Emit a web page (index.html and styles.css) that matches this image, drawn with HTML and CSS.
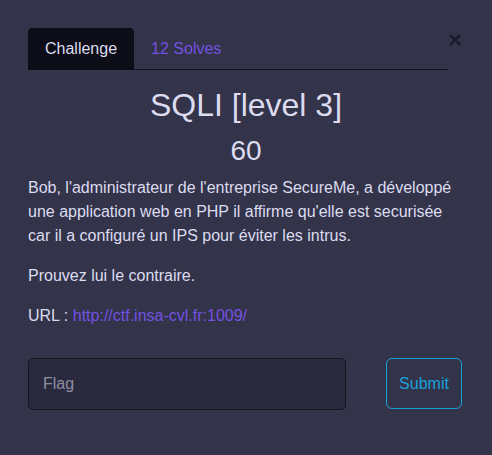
FILE: index.html
```html
<!DOCTYPE html>
<html>
<head>
<meta charset="utf-8">
<link rel="stylesheet" href="styles.css">
</head>
<body>
<div class="modal">
  <button class="close" type="button">×</button>
  <ul class="tabs">
    <li class="tab active">Challenge</li>
    <li class="tab">12 Solves</li>
  </ul>
  <h2 class="title">SQLI [level 3]</h2>
  <h3 class="value">60</h3>
  <div class="desc">
    <p>Bob, l'administrateur de l'entreprise SecureMe, a développé une application web en PHP il affirme qu'elle est securisée car il a configuré un IPS pour éviter les intrus.</p>
    <p>Prouvez lui le contraire.</p>
    <p>URL : <a href="#">http://ctf.insa-cvl.fr:1009/</a></p>
  </div>
  <form class="flag-form">
    <input class="flag-input" type="text" placeholder="Flag">
    <button class="submit" type="button">Submit</button>
  </form>
</div>
</body>
</html>
```
FILE: styles.css
```css
html, body {
  margin: 0;
  padding: 0;
  background: #33334a;
  height: 100%;
}
body {
  font-family: "Liberation Sans", Arial, sans-serif;
  color: #dcdcf0;
}
.modal {
  position: relative;
  padding: 28px 28px 28px 28px;
}
.close {
  position: absolute;
  top: 28px;
  right: 30px;
  background: none;
  border: 0;
  padding: 0;
  font-family: "Liberation Sans", Arial, sans-serif;
  font-size: 24px;
  font-weight: 700;
  line-height: 24px;
  color: #1c1c2c;
}
.tabs {
  list-style: none;
  margin: 0 16px 0 0;
  padding: 0;
  display: flex;
  border-bottom: 1px solid #14141f;
}
.tab {
  padding: 8px 16px;
  border: 1px solid transparent;
  border-radius: 4px 4px 0 0;
  font-size: 16px;
  line-height: 24px;
  color: #7352e0;
  margin-bottom: -1px;
}
.tab.active {
  background: #0d0d18;
  border-color: #0d0d18;
  color: #dcdcf0;
}
.title {
  margin: 16px 0 0;
  text-align: center;
  font-weight: 400;
  font-size: 32px;
  line-height: 38px;
}
.value {
  margin: 10px 0 0;
  text-align: center;
  font-weight: 400;
  font-size: 28px;
  line-height: 34px;
}
.desc {
  font-size: 16px;
  line-height: 24px;
  margin-top: 8px;
}
.desc p {
  margin: 0 0 16px;
}
.desc a {
  color: #7352e0;
  text-decoration: none;
}
.flag-form {
  display: flex;
  gap: 40px;
  margin: 30px 0 0 0;
}
.flag-input {
  width: 318px;
  height: 52px;
  box-sizing: border-box;
  background: #2a2a3e;
  border: 1px solid #151520;
  border-radius: 5px;
  padding: 0 14px;
  font-family: "Liberation Sans", Arial, sans-serif;
  font-size: 16px;
  color: #dcdcf0;
  outline: none;
}
.flag-input::placeholder {
  color: #8e8ea2;
}
.submit {
  width: 76px;
  height: 51px;
  box-sizing: border-box;
  background: transparent;
  border: 1px solid #18a2dc;
  border-radius: 6px;
  font-family: "Liberation Sans", Arial, sans-serif;
  font-size: 16px;
  color: #18a2dc;
  padding: 0;
}
```
